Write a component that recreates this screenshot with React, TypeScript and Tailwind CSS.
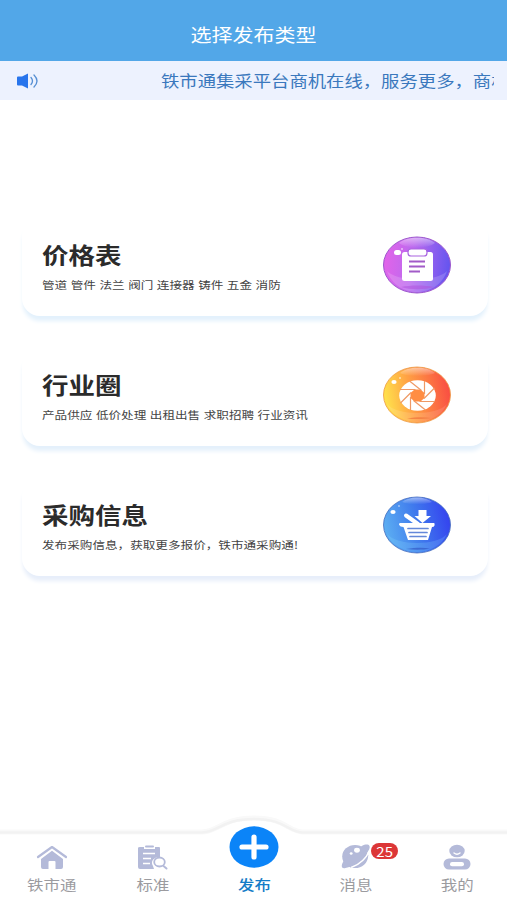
import React from "react"

const PriceIcon = () => (
    <svg className="h-[58px] w-[70px]" viewBox="0 0 70 58">
        <defs>
            <linearGradient id="price" x1="0" y1="0.2" x2="1" y2="0.3">
                <stop offset="0" stopColor="#e563e9" />
                <stop offset="0.45" stopColor="#ba6aee" />
                <stop offset="1" stopColor="#6655ef" />
            </linearGradient>
            <linearGradient id="gloss" x1="0" y1="0" x2="0" y2="1">
                <stop offset="0" stopColor="#fff" stopOpacity="0.5" />
                <stop offset="1" stopColor="#fff" stopOpacity="0" />
            </linearGradient>
        </defs>
        <ellipse cx="35" cy="29" rx="33.5" ry="28" fill="url(#price)" stroke="#9d57cd" strokeWidth="1" />
        <path d="M17 7C25 0 45 0 53 7C46 13 24 13 17 7Z" fill="url(#gloss)" />
        <path d="M5 35C10 50 24 56 35 56C46 56 60 50 65 35C55 46 15 46 5 35Z" fill="#fff" opacity="0.17" />
        <path d="M19 51C29 49 42 49 52 51C42 54 29 54 19 51Z" fill="#b04ddb" opacity="0.5" />
        <rect x="12" y="14" width="7" height="5" rx="2.5" fill="#fff" />
        <circle cx="20" cy="13" r="0.8" fill="#fff" />
        <rect x="20" y="16" width="31" height="29" rx="2.5" fill="#fff" />
        <rect x="26" y="13" width="19" height="7" rx="3" fill="#fff" stroke="#a965df" strokeWidth="1.2" />
        <path d="M27 25.5H43M27 30.5H43M27 35.5H38" stroke="#a25bc8" strokeWidth="2.2" />
    </svg>
)

const CircleIcon = () => (
    <svg className="h-[58px] w-[70px]" viewBox="0 0 70 58">
        <defs>
            <linearGradient id="circle" x1="0" y1="0.5" x2="1" y2="0.35">
                <stop offset="0" stopColor="#ffe34c" />
                <stop offset="0.4" stopColor="#ffa044" />
                <stop offset="1" stopColor="#f94b42" />
            </linearGradient>
        </defs>
        <ellipse cx="35" cy="29" rx="33.5" ry="28" fill="url(#circle)" stroke="#ed9840" strokeWidth="0.8" />
        <path d="M18 7C26 0 45 0 53 7C46 11 25 11 18 7Z" fill="url(#gloss)" />
        <path d="M5 38C10 50 24 56 35 56C46 56 60 50 65 38C55 50 15 50 5 38Z" fill="#fff" opacity="0.12" />
        <path d="M25 52.5C34 51 42 51 49 52C42 53 33 53.5 25 52.5Z" fill="#ef733c" opacity="0.7" />
        <ellipse cx="12" cy="16" rx="2.6" ry="2.1" fill="#fff" />
        <circle cx="18" cy="12" r="0.8" fill="#fff" />
        <ellipse cx="35.5" cy="29.5" rx="18.3" ry="15.3" fill="#fff" />
        <path d="M32.5 23.5H38.5L42.5 27V32L38.5 35.5H32.5L28.5 32V27Z" fill="#ff8d43" />
        <path d="M42.5 28V15M42 32.5L52.5 22M37.500 35.5H53M31.500 34.5L43.5 44M28.5 31V44M29 26.5L18.5 37M33.500 23.5H18M39.5 24.5L27.5 15" stroke="#ef9965" strokeWidth="1.2" fill="none" />
    </svg>
)

const BasketIcon = () => (
    <svg className="h-[58px] w-[70px]" viewBox="0 0 70 58">
        <defs>
            <linearGradient id="basket" x1="0" y1="0.6" x2="1" y2="0.4">
                <stop offset="0" stopColor="#5db0f2" />
                <stop offset="0.5" stopColor="#407bed" />
                <stop offset="1" stopColor="#3442ef" />
            </linearGradient>
        </defs>
        <ellipse cx="35" cy="29" rx="33.5" ry="28" fill="url(#basket)" stroke="#426bbd" strokeWidth="0.8" />
        <path d="M20 6C27 0 43 0 50 6C44 9 26 9 20 6Z" fill="url(#gloss)" />
        <path d="M5 38C10 50 24 56 35 56C46 56 60 50 65 38C55 50 15 50 5 38Z" fill="#8fe0ff" opacity="0.2" />
        <path d="M24 53C34 51.5 41 51.5 48 52.5C41 54 33 54 24 53Z" fill="#2d4fc0" opacity="0.6" />
        <ellipse cx="11" cy="16" rx="2.6" ry="2.1" fill="#fff" />
        <circle cx="17" cy="10" r="0.7" fill="#fff" />
        <path d="M24 19.5L36 28" stroke="#fff" strokeWidth="4" strokeLinecap="round" />
        <path d="M36.5 14H44.5V20H49L40.5 27L32.5 20H36.5Z" fill="#fff" />
        <path d="M18 27H52Q53 27 52.5 29.5Q52 31 50 31L46 44H26L21.5 31Q18 31 17 28.5Q17 27 18 27Z" fill="#fff" />
        <path d="M26 32.5H46M27 36.5H45M28 40.5H44" stroke="#6488d9" strokeWidth="1.7" strokeLinecap="round" />
    </svg>
)

const cards = [
    { title: "价格表", text: "管道 管件 法兰 阀门 连接器 铸件 五金 消防", icon: <PriceIcon />, shadow: "shadow-[0_6px_4px_-1px_#e3f1fc]" },
    { title: "行业圈", text: "产品供应 低价处理 出租出售 求职招聘 行业资讯", icon: <CircleIcon />, shadow: "shadow-[0_6px_4px_-1px_#e4f0fb]" },
    { title: "采购信息", text: "发布采购信息，获取更多报价，铁市通采购通!", icon: <BasketIcon />, shadow: "shadow-[0_6px_4px_-1px_#e7eefa]" },
]

const tabs = [
    {
        label: "铁市通",
        icon: (
            <svg className="h-[26px] w-[32px]" viewBox="0 0 32 26">
                <path d="M2 13L16 3L30 13" fill="none" stroke="#b4bad9" strokeWidth="2.2" strokeLinecap="round" strokeLinejoin="round" />
                <path d="M5 15L16 6.8L27 15V23Q27 25 25 25H19.5V18Q19.5 17 18.5 17H13.5Q12.5 17 12.5 18V25H7Q5 25 5 23Z" fill="#b4bad9" />
            </svg>
        ),
    },
    {
        label: "标准",
        icon: (
            <svg className="h-[26px] w-[32px]" viewBox="0 0 32 26">
                <path d="M3 3H7V5H18V3H22Q23 3 23 4V13A7 6 0 0 0 16 22L17 25H3Q1 25 1 23V4Q1 3 3 3Z" fill="#b4bad9" />
                <path d="M9 2.5H16" stroke="#b4bad9" strokeWidth="2" strokeLinecap="round" />
                <path d="M6 9.5H18M6 14.5H14M6 19.500H13" stroke="#fff" strokeWidth="1.5" />
                <ellipse cx="22.5" cy="18" rx="5.3" ry="4.5" fill="#fff" stroke="#b4bad9" strokeWidth="1.8" />
                <path d="M26.5 22L29.5 24.5" stroke="#b4bad9" strokeWidth="2" strokeLinecap="round" />
            </svg>
        ),
    },
    { label: "发布", icon: null },
    {
        label: "消息",
        icon: (
            <svg className="h-[27px] w-[32px]" viewBox="0 0 32 28">
                <ellipse cx="15" cy="14" rx="13.3" ry="12" fill="#b4bad9" />
                <path d="M22 3C28 0 32 2 29.5 7C25 16 13 25 5 26C1 27 0 24 3 19Z" fill="#b4bad9" />
                <path d="M30 8C27 15 20 22 11 25.5" fill="none" stroke="#fff" strokeWidth="1.6" />
                <path d="M29 12C28 20 22 25 14 26C20 23 26 18 29 12Z" fill="#b4bad9" />
                <ellipse cx="17" cy="7.5" rx="3" ry="2.5" fill="#fff" />
                <ellipse cx="11" cy="11" rx="1.5" ry="1.3" fill="#fff" />
            </svg>
        ),
    },
    {
        label: "我的",
        icon: (
            <svg className="h-[26px] w-[32px]" viewBox="0 0 32 26">
                <ellipse cx="16" cy="7" rx="7.7" ry="6.3" fill="#b4bad9" />
                <path d="M13 9Q16 11.5 19 9" fill="none" stroke="#fff" strokeWidth="1.4" strokeLinecap="round" />
                <rect x="2.5" y="14.5" width="27" height="11" rx="5.5" fill="#b4bad9" />
                <rect x="9" y="18" width="14" height="4.3" rx="2.1" fill="#fff" />
            </svg>
        ),
    },
]

const App = () => {
    return (
        <div className="flex h-[900px] w-[507px] flex-col overflow-hidden bg-white font-['Noto_Sans_CJK_SC',sans-serif]">
            <div className="flex h-[61px] items-center justify-center bg-[#52a7e8] pt-[6px]">
                <h1 className="scale-y-[0.84] text-[21px] leading-[28px] text-white">选择发布类型</h1>
            </div>

            <div className="flex h-[39px] items-center bg-[#edf2fe] pr-[13px] pl-[17px]">
                <svg className="h-[16px] w-[22px] shrink-0" viewBox="0 0 22 16">
                    <path d="M0 4.5Q0 3.5 1 3.5H5L11 0.5V15.5L5 12.5H1Q0 12.5 0 11.5Z" fill="#2875ec" />
                    <path d="M14 4.5Q17 8 14 11.5M17 2Q23 8 17 14" fill="none" stroke="#568fd3" strokeWidth="1.3" strokeLinecap="round" />
                </svg>
                <div className="ml-[122px] flex-1 overflow-hidden pb-[1px]">
                    <p className="scale-y-[0.86] text-[18.35px] leading-[28px] whitespace-nowrap text-[#3a78bd]">铁市通集采平台商机在线，服务更多，商机</p>
                </div>
            </div>

            <div className="flex flex-1 flex-col gap-[32px] px-[22px] pt-[118px] pr-[19px]">
                {cards.map((card) => (
                    <div key={card.title} className={`flex h-[98px] items-center justify-between rounded-[18px] bg-white pr-[36px] pb-[4px] pl-[20px] ${card.shadow}`}>
                        <div className="pt-[4px]">
                            <h2 className="scale-y-[0.84] text-[26.5px] leading-[32px] font-bold text-[#2b2b2b]">{card.title}</h2>
                            <p className="mt-[3px] scale-y-[0.84] text-[12.6px] leading-[22px] whitespace-nowrap text-[#444] [word-spacing:0.7px]">{card.text}</p>
                        </div>
                        {card.icon}
                    </div>
                ))}
            </div>

            <div className="relative h-[86px]">
                <svg className="absolute inset-x-0 top-0 h-[24px] w-[507px]" viewBox="0 0 507 24" fill="none">
                    <path d="M0 18H202C218 18 222 4 254 4C286 4 288 18 303 18H507" stroke="#f9f9f9" strokeWidth="5" />
                    <path d="M0 18.5H202C218 18.5 222 5 254 5C286 5 288 18.5 303 18.5H507" stroke="#f2f2f2" strokeWidth="2.5" />
                </svg>
                <div className="relative -mr-px grid h-full grid-cols-5 pl-px">
                    {tabs.map((tab) => (
                        <div key={tab.label} className="relative flex flex-col items-center justify-end pb-[3px]">
                            {tab.icon ? (
                                <div className="mb-px flex h-[28px] items-end">{tab.icon}</div>
                            ) : (
                                <svg className="mb-[3px] h-[42px] w-[50px]" viewBox="0 0 50 42">
                                    <ellipse cx="25" cy="21" rx="24.5" ry="20.7" fill="#0b84f8" />
                                    <path d="M13 21H37M25 11V31" stroke="#fff" strokeWidth="5.2" strokeLinecap="round" />
                                </svg>
                            )}
                            {tab.label === "消息" && (
                                <span className="absolute top-[29px] left-[66px] flex h-[16px] w-[27px] items-center justify-center rounded-full bg-[#dc3637] text-[15px] leading-none text-white">
                                    <span className="scale-y-[0.87]">25</span>
                                </span>
                            )}
                            <p className={`scale-y-[0.84] text-[16.5px] leading-[26px] ${tab.icon ? "text-[#9b9b9f]" : "font-medium text-[#147cc7]"}`}>{tab.label}</p>
                        </div>
                    ))}
                </div>
            </div>
        </div>
    )
}

export default App
